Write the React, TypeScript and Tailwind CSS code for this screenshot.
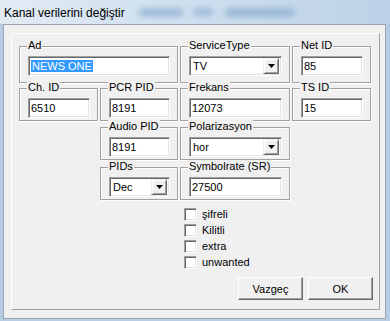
import React from 'react';

const UI = "font-['Liberation_Sans',Arial,sans-serif] text-[11px] text-black";

interface GroupProps {
  label: string;
  className?: string;
  children?: React.ReactNode;
}

// etched group box with the caption sitting on the top line
const Group = ({ label, className = '', children }: GroupProps) => (
  <div
    className={`relative border border-[#a0a0a0] shadow-[inset_1px_1px_0_#fff,1px_1px_0_#fff] pl-[8px] pr-[7px] pt-[9px] ${className}`}
  >
    <span className="absolute left-[7px] top-[-8px] bg-[#f0f0f0] px-[1px] leading-[13px]">{label}</span>
    {children}
  </div>
);

const sunken =
  'border border-t-[#a0a0a0] border-l-[#a0a0a0] border-r-white border-b-white shadow-[inset_1px_1px_0_#696969,inset_-1px_-1px_0_#e3e3e3]';

const Field = ({ value, selected = false }: { value: string; selected?: boolean }) => (
  <div className={`h-[20px] bg-white ${sunken} pl-[2px] leading-[18px] whitespace-nowrap`}>
    {selected ? <span className="bg-[#3399ff] text-white px-px">{value}</span> : value}
  </div>
);

const Combo = ({ value }: { value: string }) => (
  <div className={`h-[20px] bg-white ${sunken} flex items-center pl-[3px] pr-[2px]`}>
    <span className="flex-1 leading-[16px]">{value}</span>
    <div className="w-[16px] h-[16px] bg-[#f0f0f0] border border-t-[#f0f0f0] border-l-[#f0f0f0] border-r-[#696969] border-b-[#696969] shadow-[inset_1px_1px_0_#fff,inset_-1px_-1px_0_#a0a0a0] flex items-center justify-center">
      <svg width="7" height="4" viewBox="0 0 7 4">
        <path d="M0 0h7L3.5 4z" fill="#000" />
      </svg>
    </div>
  </div>
);

const Check = ({ label }: { label: string }) => (
  <div className="flex items-center h-[16px]">
    <div className={`w-[13px] h-[13px] bg-white ${sunken}`} />
    <span className="ml-[5px] leading-[13px]">{label}</span>
  </div>
);

const WinButton = ({ label }: { label: string }) => (
  <button className="w-[65px] h-[23px] bg-[#f0f0f0] border border-t-white border-l-white border-r-[#696969] border-b-[#696969] shadow-[inset_-1px_-1px_0_#a0a0a0] text-[11px] leading-[20px]">
    {label}
  </button>
);

export default function App() {
  return (
    <div className={`w-[390px] h-[321px] bg-[#b6cde4] flex flex-col ${UI}`}>
      {/* title bar */}
      <div className="h-[24px] flex items-center pl-[4px] bg-[linear-gradient(to_right,#e2ebf4,#d3e2f0_35%,#bdd2e7)] overflow-hidden">
        <span className="font-['Liberation_Sans',Arial,sans-serif] text-[12px] text-black leading-[14px] pt-[1px]">
          Kanal verilerini değiştir
        </span>
        <div className="ml-[14px] h-[7px] w-[44px] rounded bg-[#93b3d3] blur-[3px]" />
        <div className="ml-[10px] h-[6px] w-[20px] rounded bg-[#93b3d3] blur-[3px]" />
        <div className="ml-[12px] h-[7px] w-[70px] rounded bg-[#8fb0d2] blur-[3px]" />
      </div>

      <div className="flex flex-1">
        <div className="w-[3px]" />
        {/* client area */}
        <div className="w-[383px] h-[295px] border border-[#9aa6b3] bg-[#f0f0f0] pl-[7px] pr-[5px] pt-[8px]">
          <div className="w-[369px] h-[277px] border border-t-white border-l-white border-r-[#a0a0a0] border-b-[#a0a0a0] pl-[7px] pt-[12px]">
            <div className="grid grid-cols-[79px_78px_110px_79px] gap-x-[2px]">
              {/* row 1 */}
              <Group label="Ad" className="col-span-2 h-[37px]">
                <Field value="NEWS ONE" selected />
              </Group>
              <Group label="ServiceType" className="h-[37px]">
                <Combo value="TV" />
              </Group>
              <Group label="Net ID" className="h-[37px]">
                <Field value="85" />
              </Group>

              {/* row 2 */}
              <Group label="Ch. ID" className="mt-[5px] h-[33px]">
                <Field value="6510" />
              </Group>
              <Group label="PCR PID" className="mt-[5px] h-[33px]">
                <Field value="8191" />
              </Group>
              <Group label="Frekans" className="mt-[5px] h-[33px]">
                <Field value="12073" />
              </Group>
              <Group label="TS ID" className="mt-[5px] h-[33px]">
                <Field value="15" />
              </Group>

              {/* row 3 */}
              <div />
              <Group label="Audio PID" className="mt-[6px] h-[33px]">
                <Field value="8191" />
              </Group>
              <Group label="Polarizasyon" className="mt-[6px] h-[33px]">
                <Combo value="hor" />
              </Group>
              <div />

              {/* row 4 */}
              <div />
              <Group label="PIDs" className="mt-[7px] h-[33px]">
                <Combo value="Dec" />
              </Group>
              <Group label="Symbolrate (SR)" className="mt-[7px] h-[33px]">
                <Field value="27500" />
              </Group>
              <div />

              {/* flags */}
              <div />
              <div />
              <div className="mt-[6px] pl-[4px] flex flex-col">
                <Check label="şifreli" />
                <Check label="Kilitli" />
                <Check label="extra" />
                <Check label="unwanted" />
              </div>
            </div>

            <div className="mt-[7px] pr-[6px] flex justify-end gap-[5px]">
              <WinButton label="Vazgeç" />
              <WinButton label="OK" />
            </div>
          </div>
        </div>
      </div>
    </div>
  );
}
